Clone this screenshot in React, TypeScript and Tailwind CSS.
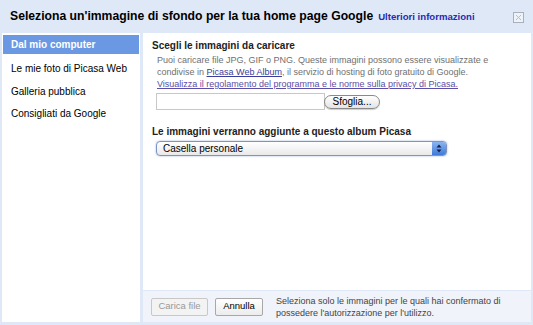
import React from "react";

export default function App() {
  const font = { fontFamily: '"Liberation Sans", Arial, sans-serif' };
  return (
    <div className="w-[533px] h-[325px] bg-[#dfe8f7] flex flex-col overflow-hidden" style={font}>
      <div className="h-[33px] flex items-center pl-[10px] pr-[8px] shrink-0">
        <span className="text-[12.2px] font-bold text-black whitespace-nowrap">Seleziona un'immagine di sfondo per la tua home page Google</span>
        <span className="text-[9.6px] font-bold text-[#2a2ab0] ml-[5px] mt-[1px] whitespace-nowrap">Ulteriori informazioni</span>
        <div className="ml-auto w-[11px] h-[11px] border border-[#aab0bb] bg-[#eef2f9] flex items-center justify-center mr-[1px] mt-[1px]">
          <svg width="7" height="7" viewBox="0 0 7 7"><path d="M1 1L6 6M6 1L1 6" stroke="#b8bec8" strokeWidth="1" /></svg>
        </div>
      </div>
      <div className="flex flex-1 pl-[2px] pr-[2px] pb-[3px] gap-[3px]">
        <div className="w-[138px] bg-white pt-[2px] px-[1px]">
          <div className="h-[19px] bg-[#6b98e3] text-white font-bold text-[10px] flex items-center pl-[8px] whitespace-nowrap">Dal mio computer</div>
          <div className="mt-[3px] h-[23px] text-[10px] text-black flex items-center pl-[8px] whitespace-nowrap">Le mie foto di Picasa Web</div>
          <div className="h-[22px] text-[10px] text-black flex items-center pl-[8px] whitespace-nowrap">Galleria pubblica</div>
          <div className="h-[23px] text-[10px] text-black flex items-center pl-[8px] whitespace-nowrap">Consigliati da Google</div>
        </div>
        <div className="flex-1 flex flex-col">
          <div className="flex-1 bg-white pl-[9px] pt-[6px]">
            <div className="text-[10px] font-bold text-[#222] leading-[13px]">Scegli le immagini da caricare</div>
            <div className="pl-[5px] mt-[2px] text-[9px] leading-[12px] text-[#707070] whitespace-nowrap">
              <div>Puoi caricare file JPG, GIF o PNG. Queste immagini possono essere visualizzate e</div>
              <div>condivise in <span className="text-[#3c3c9c] underline">Picasa Web Album</span>, il servizio di hosting di foto gratuito di Google.</div>
              <div className="text-[#5a4ea8] underline">Visualizza il regolamento del programma e le norme sulla privacy di Picasa.</div>
            </div>
            <div className="flex items-center mt-[3px] pl-[4px]">
              <div className="w-[169px] h-[17px] border border-[#c8c8c8] bg-white"></div>
              <div className="ml-[-1px] h-[14px] w-[56px] rounded-full border border-[#8a8a8a] bg-gradient-to-b from-[#ffffff] to-[#e4e4e4] text-[10px] text-black flex items-center justify-center shadow-[0_1px_1px_rgba(0,0,0,0.2)]">Sfoglia...</div>
            </div>
            <div className="text-[10px] font-bold text-[#222] mt-[15px] leading-[13px]">Le immagini verranno aggiunte a questo album Picasa</div>
            <div className="mt-[3px] ml-[4px] w-[291px] h-[15px] rounded-[4px] border border-[#7d93c0] bg-gradient-to-b from-[#ffffff] to-[#e9e9e9] flex items-center shadow-[0_0_2px_rgba(80,120,200,0.6)]">
              <span className="text-[10px] text-black pl-[6px] flex-1">Casella personale</span>
              <div className="w-[14px] h-[13px] rounded-r-[3px] bg-gradient-to-b from-[#8ab4f0] to-[#3f7ad8] flex items-center justify-center">
                <svg width="6" height="9" viewBox="0 0 6 9"><path d="M3 0.5L5.5 3.5H0.5Z M3 8.5L5.5 5.5H0.5Z" fill="#10204a" /></svg>
              </div>
            </div>
          </div>
          <div className="h-[31px] mt-[1px] bg-[#f0f3f9] flex items-center pl-[8px]">
            <div className="h-[18px] w-[57px] border border-[#c8c8c8] bg-[#f3f3f3] text-[9.5px] text-[#999] flex items-center justify-center rounded-[2px]">Carica file</div>
            <div className="h-[18px] w-[48px] ml-[7px] border border-[#a8a8a8] bg-gradient-to-b from-[#ffffff] to-[#ececec] text-[9.5px] text-black flex items-center justify-center rounded-[2px]">Annulla</div>
            <div className="ml-[13px] text-[9px] leading-[12px] text-[#444] whitespace-nowrap">
              <div>Seleziona solo le immagini per le quali hai confermato di</div>
              <div>possedere l'autorizzazione per l'utilizzo.</div>
            </div>
          </div>
        </div>
      </div>
    </div>
  );
}
